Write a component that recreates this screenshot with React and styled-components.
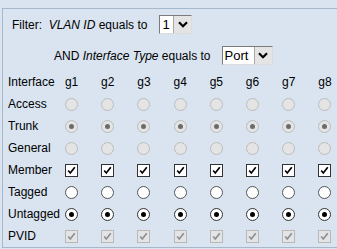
import React from 'react';
import styled, { createGlobalStyle, css } from 'styled-components';

const Global = createGlobalStyle`
  html, body {
    margin: 0;
    padding: 0;
    background: #d9e4f0;
    overflow: hidden;
  }
  body {
    font-family: "Liberation Sans", Arial, sans-serif;
    font-size: 12px;
    color: #000;
  }
`;

const Panel = styled.div`
  margin: 8px 0 0 2px;
  width: calc(100vw - 2px);
  box-sizing: border-box;
  overflow: hidden;
  border: 1px solid #a7b8ca;
  border-right: none;
  padding: 6px 0 0 5px;
`;

const FilterRow = styled.div`
  display: flex;
  align-items: center;
  height: 19px;
  padding-left: ${p => p.indent}px;
  margin-bottom: ${p => p.after}px;
  white-space: pre;
`;

const Em = styled.i`
  font-style: italic;
`;

const Select = styled.div`
  display: inline-flex;
  height: 19px;
  box-sizing: border-box;
  margin-left: ${p => p.gap}px;
  border: 1px solid;
  border-color: #7b7b7b #dcdcdc #dcdcdc #7b7b7b;
  background: #fff;
`;

const SelectValue = styled.span`
  display: flex;
  align-items: center;
  width: ${p => p.width}px;
  padding-left: 2px;
  font-size: 13px;
  color: #000;
`;

const SelectButton = styled.span`
  display: flex;
  align-items: center;
  justify-content: center;
  width: 17px;
  background: #e4e4e4;
  border-left: 1px solid #a9a9a9;
`;

const Grid = styled.div`
  display: grid;
  grid-template-columns: 45.5px repeat(8, 36.2px);
  grid-auto-rows: 22px;
  margin-top: 6px;
`;

const Label = styled.div`
  display: flex;
  align-items: center;
`;

const Cell = styled.div`
  display: flex;
  align-items: center;
  justify-content: center;
`;

const Radio = styled.span`
  position: relative;
  width: 13px;
  height: 13px;
  box-sizing: border-box;
  border-radius: 50%;
  border: 1px solid #555;
  background: #fff;
  ${p => p.disabled && css`
    border-color: #bcbcbc;
    background: #e4e4e4;
  `}
  ${p => p.checked && css`
    &::after {
      content: '';
      position: absolute;
      left: 3px;
      top: 3px;
      width: 5px;
      height: 5px;
      border-radius: 50%;
      background: ${p.disabled ? '#6b6b6b' : '#000'};
    }
  `}
  ${p => p.checked && !p.disabled && css`
    border-color: #333;
  `}
`;

const Box = styled.span`
  display: flex;
  align-items: center;
  justify-content: center;
  width: 13px;
  height: 13px;
  box-sizing: border-box;
  border: 1px solid ${p => (p.disabled ? '#b8b8b8' : '#333')};
  background: ${p => (p.disabled ? '#e4e4e4' : '#fff')};
  color: ${p => (p.disabled ? '#8a8f98' : '#000')};
`;

const Chevron = () => (
  <svg width="10" height="7" viewBox="0 0 10 7">
    <path d="M1 1.3 L5 5.3 L9 1.3" fill="none" stroke="#000" strokeWidth="2.2" />
  </svg>
);

const Check = ({ disabled }) => (
  <Box disabled={disabled}>
    <svg width="11" height="11" viewBox="0 0 11 11">
      <path d="M2.2 5.5 L4.3 8 L8.8 2.2" fill="none" stroke="currentColor" strokeWidth="1.7" />
    </svg>
  </Box>
);

const ports = ['g1', 'g2', 'g3', 'g4', 'g5', 'g6', 'g7', 'g8'];

const rows = [
  { name: 'Access', kind: 'radio', disabled: true, checked: false },
  { name: 'Trunk', kind: 'radio', disabled: true, checked: true },
  { name: 'General', kind: 'radio', disabled: true, checked: false },
  { name: 'Member', kind: 'check', disabled: false },
  { name: 'Tagged', kind: 'radio', disabled: false, checked: false },
  { name: 'Untagged', kind: 'radio', disabled: false, checked: true },
  { name: 'PVID', kind: 'check', disabled: true },
];

export default function App() {
  return (
    <>
      <Global />
      <Panel>
        <FilterRow indent={4} after={12}>
          Filter:{'\u00a0 '}<Em>VLAN ID</Em> equals to
          <Select gap={12}>
            <SelectValue width={11}>1</SelectValue>
            <SelectButton><Chevron /></SelectButton>
          </Select>
        </FilterRow>
        <FilterRow indent={46} after={0}>
          AND <Em>Interface Type</Em> equals to
          <Select gap={11}>
            <SelectValue width={29}>Port</SelectValue>
            <SelectButton><Chevron /></SelectButton>
          </Select>
        </FilterRow>
        <Grid>
          <Label>Interface</Label>
          {ports.map(p => <Cell key={p}>{p}</Cell>)}
          {rows.map(r => (
            <React.Fragment key={r.name}>
              <Label>{r.name}</Label>
              {ports.map(p => (
                <Cell key={p}>
                  {r.kind === 'radio'
                    ? <Radio disabled={r.disabled} checked={r.checked} />
                    : <Check disabled={r.disabled} />}
                </Cell>
              ))}
            </React.Fragment>
          ))}
        </Grid>
      </Panel>
    </>
  );
}
